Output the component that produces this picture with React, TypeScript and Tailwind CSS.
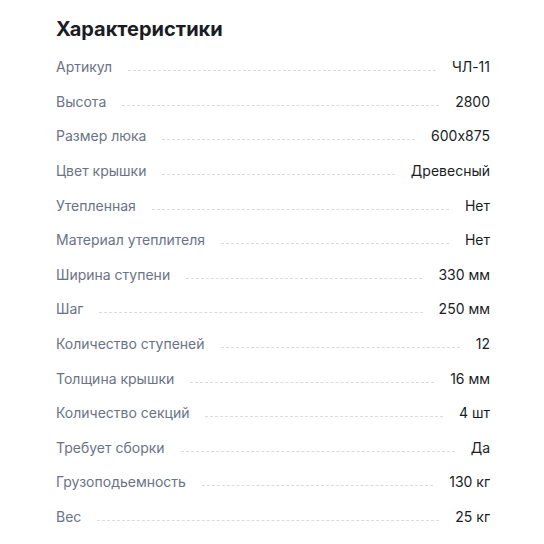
const specs: [string, string][] = [
  ['Артикул', 'ЧЛ-11'],
  ['Высота', '2800'],
  ['Размер люка', '600x875'],
  ['Цвет крышки', 'Древесный'],
  ['Утепленная', 'Нет'],
  ['Материал утеплителя', 'Нет'],
  ['Ширина ступени', '330 мм'],
  ['Шаг', '250 мм'],
  ['Количество ступеней', '12'],
  ['Толщина крышки', '16 мм'],
  ['Количество секций', '4 шт'],
  ['Требует сборки', 'Да'],
  ['Грузоподьемность', '130 кг'],
  ['Вес', '25 кг'],
];

export default function App() {
  return (
    <div className="min-h-[544px] bg-white pl-14 pr-[54px] pt-[15px] font-['Inter',sans-serif] [font-feature-settings:'calt'_0]">
      <h2 className="text-[20px] font-bold leading-[28px] text-[#1b1d24]">Характеристики</h2>
      <div className="mt-[7px] flex flex-col">
        {specs.map(([label, value]) => (
          <div key={label} className="flex h-[34.6px] items-center gap-4 text-[14px] leading-5">
            <span className="text-[#6b7385]">{label}</span>
            <div className="mt-[7px] flex-1 border-t border-dashed border-[#d9dbe0]" />
            <span className="text-[#1b1d24]">{value}</span>
          </div>
        ))}
      </div>
    </div>
  );
}
